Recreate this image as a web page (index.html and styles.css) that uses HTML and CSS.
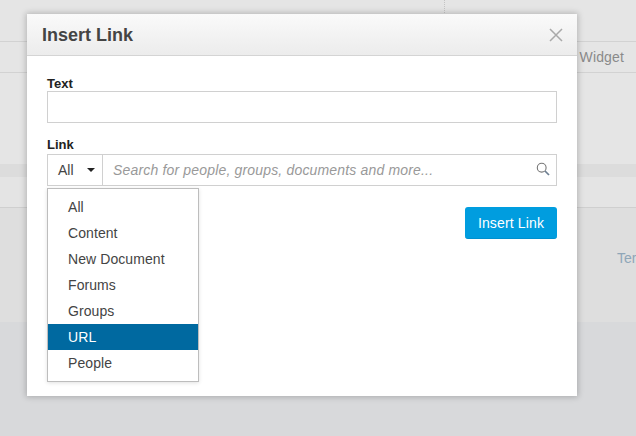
FILE: index.html
```html
<!DOCTYPE html>
<html lang="en">
<head>
<meta charset="utf-8">
<title>Insert Link</title>
<link rel="stylesheet" href="styles.css">
</head>
<body>
<div class="page">
  <div class="page-top"><div class="page-divider"></div></div>
  <div class="page-tabs"><span>Widget</span></div>
  <div class="page-blank"></div>
  <div class="page-band"></div>
  <div class="page-strip"></div>
  <div class="page-panel"><span>Ter</span></div>
  <div class="page-foot"></div>
</div>
<div class="modal">
  <div class="modal-head">
    <h1>Insert Link</h1>
    <svg class="close" width="14" height="14" viewBox="0 0 14 14"><path d="M1 1 13 13M13 1 1 13" stroke="#a9a9a9" stroke-width="1.5" fill="none"/></svg>
  </div>
  <div class="modal-body">
    <label class="label">Text</label>
    <div class="input"></div>
    <label class="label label-link">Link</label>
    <div class="combo">
      <div class="combo-select"><span>All</span><i class="caret"></i></div>
      <div class="combo-search">
        <span>Search for people, groups, documents and more...</span>
        <svg width="14" height="14" viewBox="0 0 14 14"><circle cx="5.7" cy="5.7" r="4.4" stroke="#777" stroke-width="1.1" fill="none"/><path d="M9 9 13 13" stroke="#6d7f92" stroke-width="1.7" fill="none"/></svg>
      </div>
    </div>
    <div class="actions"><button class="primary">Insert Link</button></div>
    <ul class="menu">
      <li>All</li>
      <li>Content</li>
      <li>New Document</li>
      <li>Forums</li>
      <li>Groups</li>
      <li class="active">URL</li>
      <li>People</li>
    </ul>
  </div>
</div>
</body>
</html>
```
FILE: styles.css
```css
* { box-sizing: border-box; }
html, body { margin: 0; padding: 0; }
body {
  width: 636px;
  height: 436px;
  overflow: hidden;
  position: relative;
  font-family: "Liberation Sans", Arial, sans-serif;
  background: #d8d9db;
}
.page { display: flex; flex-direction: column; height: 436px; color: #8a8a8a; font-size: 14px; }
.page-top { height: 41px; background: #e5e5e5; position: relative; }
.page-divider { margin-left: 444px; height: 15px; width: 1px; border-left: 1px dotted #c4c4c4; }
.page-tabs {
  height: 32px; background: #e5e5e5;
  border-top: 1px solid #d2d2d2; border-bottom: 1px solid #d2d2d2;
  display: flex; align-items: center; justify-content: flex-end; padding-right: 12px;
}
.page-tabs span { letter-spacing: .15px; }
.page-blank { height: 91px; background: #e5e5e5; }
.page-band { height: 13px; background: #dcdcdc; }
.page-strip { height: 30px; background: #e4e4e4; }
.page-panel { height: 115px; background: #dedede; border-top: 1px solid #cfcfcf; padding: 42px 0 0 617px; color: #8fa6b8; white-space: nowrap; overflow: hidden; }
.page-foot { flex: 1; background: #d8d9db; }

.modal {
  position: absolute; left: 27px; top: 14px; width: 550px; height: 382px;
  background: #fff;
  box-shadow: 0 0 6px 1px rgba(0,0,0,.22);
}
.modal-head {
  height: 42px; padding: 0 14px 0 15px;
  display: flex; align-items: center; justify-content: space-between;
  background: linear-gradient(#fafafa, #ececec);
  border-bottom: 1px solid #d4d4d4;
}
.modal-head h1 { margin: 2px 0 0; font-size: 18px; font-weight: bold; color: #444; }
.close { margin-top: 1px; }
.modal-body { position: relative; padding: 21px 20px 20px; }
.label { display: block; font-size: 13px; font-weight: bold; line-height: 14px; color: #222; }
.label-link { margin-top: 14px; line-height: 15px; height: 17px; }
.input { height: 32px; border: 1px solid #d0d0d0; background: #fff; }
.combo { display: flex; height: 32px; border: 1px solid #d0d0d0; font-size: 14px; }
.combo-select {
  width: 55px; border-right: 1px solid #d0d0d0; color: #444;
  display: flex; align-items: center; justify-content: space-between; padding: 0 7px 0 10px;
}
.caret { width: 0; height: 0; border-left: 4px solid transparent; border-right: 4px solid transparent; border-top: 4px solid #222; }
.combo-search {
  flex: 1; display: flex; align-items: center; justify-content: space-between;
  padding: 0 6px 0 10px; color: #999; font-style: italic;
}
.combo-search span { letter-spacing: .17px; }
.combo-search svg { margin-top: -3px; }
.actions { display: flex; justify-content: flex-end; margin-top: 21px; }
.primary {
  width: 92px; height: 32px; padding: 0;
  background: #009ddf; color: #fff; border: 0; border-bottom: 1px solid #0090cf; border-radius: 3px;
  font: 14px "Liberation Sans", Arial, sans-serif;
  letter-spacing: .15px;
}
.menu {
  position: absolute; left: 20px; top: 132px; width: 152px;
  margin: 0; padding: 5px 0; list-style: none;
  background: #fff; border: 1px solid #bdbdbd;
  box-shadow: 0 1px 4px rgba(0,0,0,.12);
  font-size: 14px; color: #444;
}
.menu li { height: 26px; line-height: 26px; padding-left: 20px; letter-spacing: .08px; }
.menu li.active { background: #0069a0; color: #fff; }
```
